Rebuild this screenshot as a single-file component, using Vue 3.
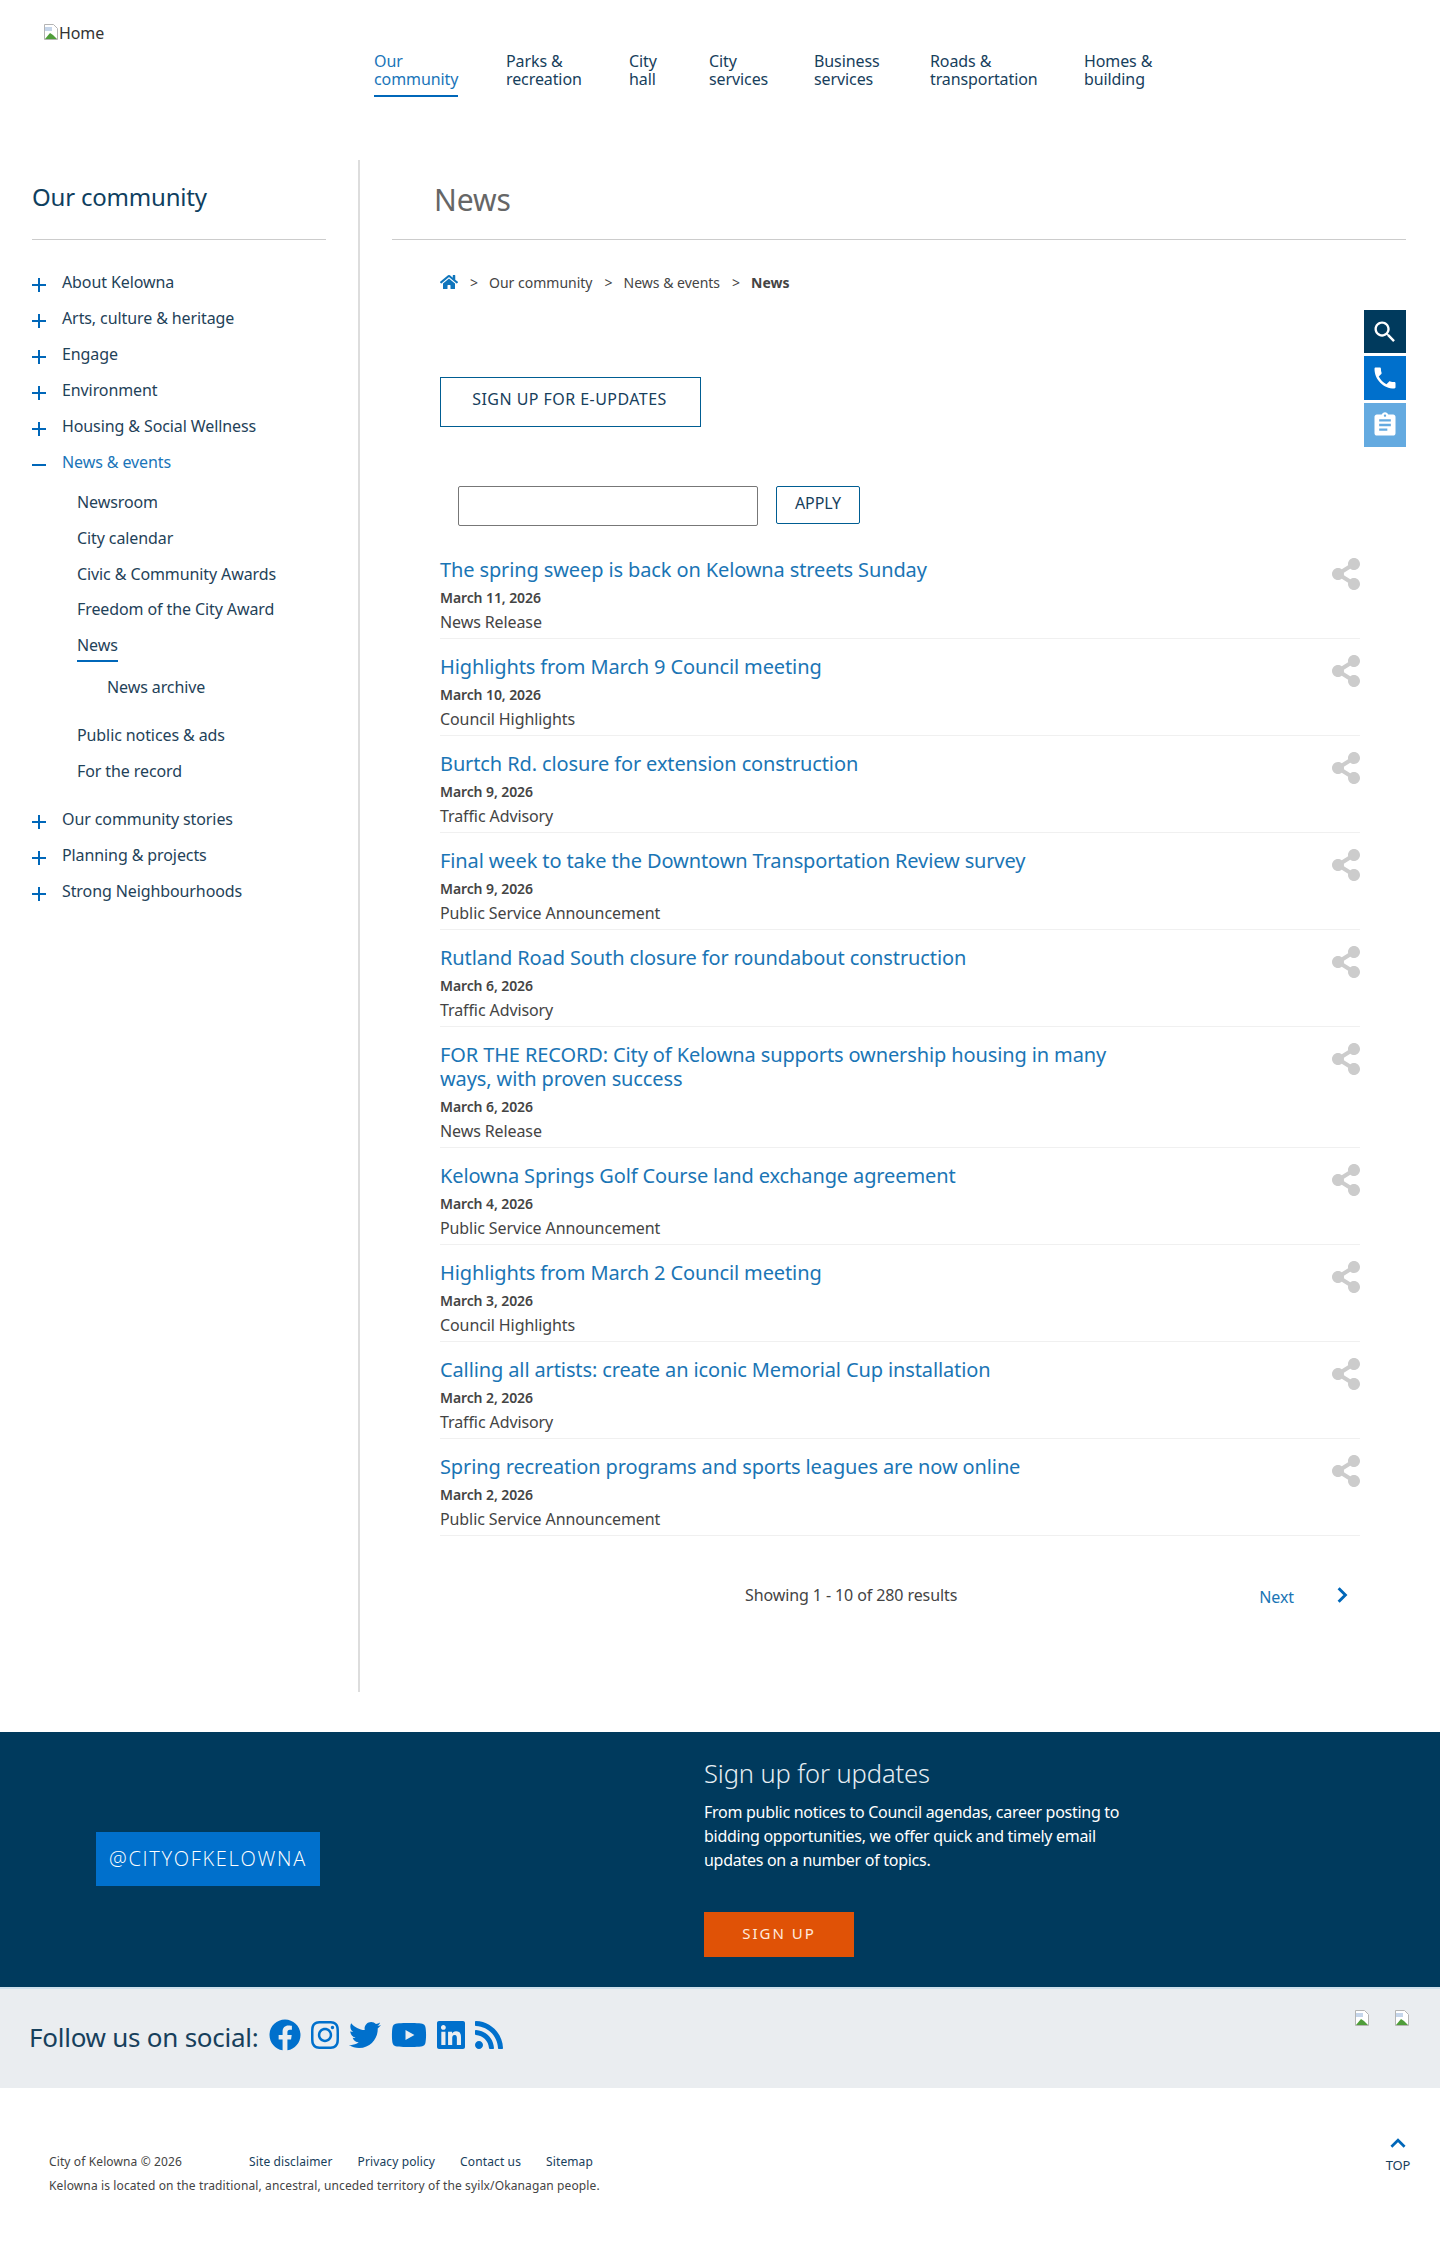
<template>
  <div class="page">
    <header class="site-header">
      <a class="logo">
        <svg class="broken" viewBox="0 0 16 16"><path d="M1.5.5h9l4 4v11h-13z" fill="#fff" stroke="#b4b4b4"/><path d="M2 15l5-6 3 2 4 4z" fill="#4f9d3a"/><path d="M2 3h7v4H2z" fill="#c5d5ea"/></svg>
        <span>Home</span>
      </a>
      <nav class="main-nav">
        <a v-for="item in navItems" :key="item[0] + item[1]" class="nav-item" :class="{ active: item[0] === 'Our' }">{{ item[0] }}<br>{{ item[1] }}</a>
      </nav>
    </header>

    <div class="content">
      <aside class="sidebar">
        <h2 class="side-title">Our community</h2>
        <ul class="side-list">
          <li v-for="item in topBefore" :key="item" class="side-item"><i class="plus"></i>{{ item }}</li>
          <li class="side-item open"><i class="minus"></i>News &amp; events</li>
          <li class="sub-list">
            <div v-for="item in subBefore" :key="item" class="sub-item">{{ item }}</div>
            <div class="sub-item"><span class="current">News</span></div>
            <div class="sub-sub-item">News archive</div>
            <div class="sub-item gap">Public notices &amp; ads</div>
            <div class="sub-item">For the record</div>
          </li>
          <li v-for="(item, i) in topAfter" :key="item" class="side-item" :class="{ after: i === 0 }"><i class="plus"></i>{{ item }}</li>
        </ul>
      </aside>

      <main class="main">
        <h1 class="page-title">News</h1>
        <div class="main-body">
          <div class="breadcrumb">
            <svg class="home-icon" viewBox="0 0 576 512"><path d="M280.37 148.26L96 300.11V464a16 16 0 0 0 16 16l112.06-.29a16 16 0 0 0 15.92-16V368a16 16 0 0 1 16-16h64a16 16 0 0 1 16 16v95.64a16 16 0 0 0 16 16.05L464 480a16 16 0 0 0 16-16V300L295.67 148.26a12.19 12.19 0 0 0-15.3 0zM571.6 251.47L488 182.56V44.05a12 12 0 0 0-12-12h-56a12 12 0 0 0-12 12v72.61L318.47 43a48 48 0 0 0-61 0L4.34 251.47a12 12 0 0 0-1.6 16.9l25.5 31A12 12 0 0 0 45.15 301l235.22-193.74a12.19 12.19 0 0 1 15.3 0L530.9 301a12 12 0 0 0 16.9-1.6l25.5-31a12 12 0 0 0-1.7-16.93z"/></svg>
            <span class="sep">&gt;</span><span>Our community</span>
            <span class="sep">&gt;</span><span>News &amp; events</span>
            <span class="sep">&gt;</span><b>News</b>
          </div>

          <a class="outline-btn">SIGN UP FOR E-UPDATES</a>

          <div class="filter">
            <input class="filter-input" type="text">
            <button class="apply-btn">APPLY</button>
          </div>

          <article v-for="row in news" :key="row.title" class="news-row">
            <div class="news-text">
              <a class="news-title">{{ row.title }}</a>
              <div class="news-date">{{ row.date }}</div>
              <div class="news-cat">{{ row.cat }}</div>
            </div>
            <svg class="share" viewBox="0 0 448 512"><path d="M352 320c-22.608 0-43.387 7.819-59.79 20.895l-102.486-64.054a96.551 96.551 0 0 0 0-41.683l102.486-64.054C308.613 184.181 329.392 192 352 192c53.019 0 96-42.981 96-96S405.019 0 352 0s-96 42.981-96 96c0 7.158.79 14.13 2.276 20.841L155.79 180.895C139.387 167.819 118.608 160 96 160c-53.019 0-96 42.981-96 96s42.981 96 96 96c22.608 0 43.387-7.819 59.79-20.895l102.486 64.054A96.301 96.301 0 0 0 256 416c0 53.019 42.981 96 96 96s96-42.981 96-96-42.981-96-96-96z"/></svg>
          </article>

          <div class="pager">
            <span class="showing">Showing 1 - 10 of 280 results</span>
            <a class="next">Next</a>
            <svg class="next-chevron" viewBox="0 0 12 16"><path d="M3 2l6 6-6 6" fill="none" stroke="#0067b9" stroke-width="2.6"/></svg>
          </div>
        </div>
      </main>
    </div>

    <div class="quick-links">
      <a class="quick dark"><svg viewBox="0 0 24 24"><path d="M15.5 14h-.79l-.28-.27C15.41 12.59 16 11.11 16 9.5 16 5.91 13.09 3 9.5 3S3 5.91 3 9.5 5.91 16 9.5 16c1.61 0 3.09-.59 4.23-1.57l.27.28v.79l5 4.99L20.49 19l-4.99-5zm-6 0C7.01 14 5 11.99 5 9.5S7.01 5 9.5 5 14 7.01 14 9.5 11.99 14 9.5 14z"/></svg></a>
      <a class="quick blue"><svg viewBox="0 0 24 24"><path d="M6.62 10.79c1.44 2.83 3.76 5.14 6.59 6.59l2.2-2.2c.27-.27.67-.36 1.02-.24 1.12.37 2.33.57 3.57.57.55 0 1 .45 1 1V20c0 .55-.45 1-1 1-9.39 0-17-7.61-17-17 0-.55.45-1 1-1h3.5c.55 0 1 .45 1 1 0 1.25.2 2.45.57 3.57.11.35.03.74-.25 1.02l-2.2 2.2z"/></svg></a>
      <a class="quick light"><svg viewBox="0 0 24 24"><path d="M19 3h-4.18C14.4 1.84 13.3 1 12 1c-1.3 0-2.4.84-2.82 2H5c-1.1 0-2 .9-2 2v14c0 1.1.9 2 2 2h14c1.1 0 2-.9 2-2V5c0-1.1-.9-2-2-2zm-7 0c.55 0 1 .45 1 1s-.45 1-1 1-1-.45-1-1 .45-1 1-1zm2 14H7v-2h7v2zm3-4H7v-2h10v2zm0-4H7V7h10v2z"/></svg></a>
    </div>

    <section class="signup-band">
      <div class="band-left"><a class="handle">@CITYOFKELOWNA</a></div>
      <div class="band-right">
        <h3>Sign up for updates</h3>
        <p>From public notices to Council agendas, career posting to<br>bidding opportunities, we offer quick and timely email<br>updates on a number of topics.</p>
        <a class="signup-btn">SIGN UP</a>
      </div>
    </section>

    <section class="social-band">
      <span class="follow">Follow us on social:</span>
      <svg class="s-fb" viewBox="0 0 512 512"><path d="M504 256C504 119 393 8 256 8S8 119 8 256c0 123.78 90.69 226.38 209.25 245V327.69h-63V256h63v-54.64c0-62.15 37-96.48 93.67-96.48 27.14 0 55.52 4.84 55.52 4.84v61h-31.28c-30.8 0-40.41 19.12-40.41 38.73V256h68.78l-11 71.69h-57.78V501C413.31 482.38 504 379.78 504 256z"/></svg>
      <svg class="s-ig" viewBox="0 0 448 512"><path d="M224.1 141c-63.6 0-114.9 51.3-114.9 114.9s51.3 114.9 114.9 114.9S339 319.5 339 255.9 287.7 141 224.1 141zm0 189.6c-41.1 0-74.7-33.5-74.7-74.7s33.5-74.7 74.7-74.7 74.7 33.5 74.7 74.7-33.6 74.7-74.7 74.7zm146.4-194.3c0 14.9-12 26.8-26.8 26.8-14.9 0-26.8-12-26.8-26.8s12-26.8 26.8-26.8 26.8 12 26.8 26.8zm76.1 27.2c-1.7-35.9-9.9-67.7-36.2-93.9-26.2-26.2-58-34.4-93.9-36.2-37-2.1-147.9-2.1-184.9 0-35.8 1.7-67.6 9.9-93.9 36.1s-34.4 58-36.2 93.9c-2.1 37-2.1 147.9 0 184.9 1.7 35.9 9.9 67.7 36.2 93.9s58 34.4 93.9 36.2c37 2.1 147.9 2.1 184.9 0 35.9-1.7 67.7-9.9 93.9-36.2 26.2-26.2 34.4-58 36.2-93.9 2.1-37 2.1-147.8 0-184.8zM398.8 388c-7.8 19.6-22.9 34.7-42.6 42.6-29.5 11.7-99.5 9-132.1 9s-102.7 2.6-132.1-9c-19.6-7.8-34.7-22.9-42.6-42.6-11.7-29.5-9-99.5-9-132.1s-2.6-102.7 9-132.1c7.8-19.6 22.9-34.7 42.6-42.6 29.5-11.7 99.5-9 132.1-9s102.7-2.6 132.1 9c19.6 7.8 34.7 22.9 42.6 42.6 11.7 29.5 9 99.5 9 132.1s2.7 102.7-9 132.1z"/></svg>
      <svg class="s-tw" viewBox="0 0 512 512"><path d="M459.37 151.716c.325 4.548.325 9.097.325 13.645 0 138.72-105.583 298.558-298.558 298.558-59.452 0-114.68-17.219-161.137-47.106 8.447.974 16.568 1.299 25.34 1.299 49.055 0 94.213-16.568 130.274-44.832-46.132-.975-84.792-31.188-98.112-72.772 6.498.974 12.995 1.624 19.818 1.624 9.421 0 18.843-1.3 27.614-3.573-48.081-9.747-84.143-51.98-84.143-102.985v-1.299c13.969 7.797 30.214 12.67 47.431 13.319-28.264-18.843-46.781-51.005-46.781-87.391 0-19.492 5.197-37.36 14.294-52.954 51.655 63.675 129.3 105.258 216.365 109.807-1.624-7.797-2.599-15.918-2.599-24.04 0-57.828 46.782-104.934 104.934-104.934 30.213 0 57.502 12.67 76.67 33.137 23.715-4.548 46.456-13.32 66.599-25.34-7.798 24.366-24.366 44.833-46.132 57.827 21.117-2.273 41.584-8.122 60.426-16.243-14.292 20.791-32.161 39.308-52.628 54.253z"/></svg>
      <svg class="s-yt" viewBox="0 0 576 512"><path d="M549.655 124.083c-6.281-23.65-24.787-42.276-48.284-48.597C458.781 64 288 64 288 64S117.22 64 74.629 75.486c-23.497 6.322-42.003 24.947-48.284 48.597-11.412 42.867-11.412 132.305-11.412 132.305s0 89.438 11.412 132.305c6.281 23.65 24.787 41.5 48.284 47.821C117.22 448 288 448 288 448s170.78 0 213.371-11.486c23.497-6.321 42.003-24.171 48.284-47.821 11.412-42.867 11.412-132.305 11.412-132.305s0-89.438-11.412-132.305zm-317.51 213.508V175.185l142.739 81.205-142.739 81.201z"/></svg>
      <svg class="s-li" viewBox="0 0 448 512"><path d="M416 32H31.9C14.3 32 0 46.5 0 64.3v383.4C0 465.5 14.3 480 31.9 480H416c17.6 0 32-14.5 32-32.3V64.3c0-17.8-14.4-32.3-32-32.3zM135.4 416H69V202.2h66.5V416zm-33.2-243c-21.3 0-38.5-17.3-38.5-38.5S80.9 96 102.2 96c21.2 0 38.5 17.3 38.5 38.5 0 21.3-17.2 38.5-38.5 38.5zm282.1 243h-66.4V312c0-24.8-.5-56.7-34.5-56.7-34.6 0-39.9 27-39.9 54.9V416h-66.4V202.2h63.7v29.2h.9c8.9-16.8 30.6-34.5 62.9-34.5 67.2 0 79.7 44.3 79.7 101.9V416z"/></svg>
      <svg class="s-rs" viewBox="0 0 448 512"><path d="M128.081 415.959c0 35.369-28.672 64.041-64.041 64.041S0 451.328 0 415.959s28.672-64.041 64.041-64.041 64.04 28.673 64.04 64.041zm175.66 47.25c-8.354-154.6-132.185-278.587-286.95-286.95C7.656 175.765 0 183.105 0 192.253v48.069c0 8.415 6.49 15.472 14.887 16.018 111.832 7.284 201.473 96.702 208.772 208.772.547 8.397 7.604 14.887 16.018 14.887h48.069c9.149.001 16.489-7.655 15.995-16.79zm144.249.288C439.596 229.677 251.465 40.445 16.503 32.01 7.473 31.686 0 38.981 0 48.016v48.068c0 8.625 6.835 15.645 15.453 15.999 191.179 7.839 344.627 161.316 352.465 352.465.353 8.618 7.373 15.453 15.999 15.453h48.068c9.034-.001 16.329-7.474 16.005-16.504z"/></svg>
      <div class="badges">
        <svg class="broken" viewBox="0 0 16 16"><path d="M1.5.5h9l4 4v11h-13z" fill="#fff" stroke="#b4b4b4"/><path d="M2 15l5-6 3 2 4 4z" fill="#4f9d3a"/><path d="M2 3h7v4H2z" fill="#c5d5ea"/></svg>
        <svg class="broken" viewBox="0 0 16 16"><path d="M1.5.5h9l4 4v11h-13z" fill="#fff" stroke="#b4b4b4"/><path d="M2 15l5-6 3 2 4 4z" fill="#4f9d3a"/><path d="M2 3h7v4H2z" fill="#c5d5ea"/></svg>
      </div>
    </section>

    <footer class="site-footer">
      <div class="foot-text">
        <div class="foot-line">
          <span class="copy">City of Kelowna © 2026</span>
          <a>Site disclaimer</a><a>Privacy policy</a><a>Contact us</a><a>Sitemap</a>
        </div>
        <div class="territory">Kelowna is located on the traditional, ancestral, unceded territory of the syilx/Okanagan people.</div>
      </div>
      <a class="top-link">
        <svg viewBox="0 0 16 10"><path d="M2 8l6-6 6 6" fill="none" stroke="#0067b9" stroke-width="2.4"/></svg>
        <span>TOP</span>
      </a>
    </footer>
  </div>
</template>

<script setup>
const navItems = [
  ["Our", "community"],
  ["Parks &", "recreation"],
  ["City", "hall"],
  ["City", "services"],
  ["Business", "services"],
  ["Roads &", "transportation"],
  ["Homes &", "building"],
];

const topBefore = ["About Kelowna", "Arts, culture & heritage", "Engage", "Environment", "Housing & Social Wellness"];
const subBefore = ["Newsroom", "City calendar", "Civic & Community Awards", "Freedom of the City Award"];
const topAfter = ["Our community stories", "Planning & projects", "Strong Neighbourhoods"];

const news = [
  { title: "The spring sweep is back on Kelowna streets Sunday", date: "March 11, 2026", cat: "News Release" },
  { title: "Highlights from March 9 Council meeting", date: "March 10, 2026", cat: "Council Highlights" },
  { title: "Burtch Rd. closure for extension construction", date: "March 9, 2026", cat: "Traffic Advisory" },
  { title: "Final week to take the Downtown Transportation Review survey", date: "March 9, 2026", cat: "Public Service Announcement" },
  { title: "Rutland Road South closure for roundabout construction", date: "March 6, 2026", cat: "Traffic Advisory" },
  { title: "FOR THE RECORD: City of Kelowna supports ownership housing in many ways, with proven success", date: "March 6, 2026", cat: "News Release" },
  { title: "Kelowna Springs Golf Course land exchange agreement", date: "March 4, 2026", cat: "Public Service Announcement" },
  { title: "Highlights from March 2 Council meeting", date: "March 3, 2026", cat: "Council Highlights" },
  { title: "Calling all artists: create an iconic Memorial Cup installation", date: "March 2, 2026", cat: "Traffic Advisory" },
  { title: "Spring recreation programs and sports leagues are now online", date: "March 2, 2026", cat: "Public Service Announcement" },
];
</script>

<style>
html, body { margin: 0; background: #fff; }
</style>

<style scoped>
.page {
  position: relative;
  width: 1440px;
  height: 2264px;
  overflow: hidden;
  font-family: "Noto Sans", "Open Sans", sans-serif;
  font-size: 16px;
  letter-spacing: -0.1px;
  color: #333;
}

/* header */
.site-header {
  display: flex;
  height: 160px;
}
.logo {
  width: 374px;
  box-sizing: border-box;
  padding: 24px 0 0 43px;
  display: flex;
  align-items: flex-start;
  line-height: 18px;
  color: #333;
}
.broken { width: 16px; height: 16px; flex: none; }
.main-nav {
  display: grid;
  grid-template-columns: 132px 123px 80px 105px 116px 154px auto;
  justify-items: start;
  align-items: start;
  padding-top: 52px;
}
.nav-item {
  line-height: 18px;
  padding-bottom: 7px;
  color: #17405c;
  border-bottom: 2px solid transparent;
}
.nav-item.active { color: #1a75b9; border-bottom-color: #0067b9; }

/* content */
.content { display: flex; height: 1532px; }
.sidebar {
  width: 360px;
  box-sizing: border-box;
  padding: 0 32px;
  border-right: 2px solid #ddd;
}
.side-title {
  margin: 0;
  height: 80px;
  box-sizing: border-box;
  padding-top: 20px;
  font-size: 24px;
  line-height: 34px;
  font-weight: 400;
  letter-spacing: -0.2px;
  color: #0f3f5f;
  border-bottom: 1px solid #ccc;
}
.side-list { list-style: none; margin: 24px 0 0; padding: 0; color: #1f4259; }
.side-item {
  display: flex;
  align-items: center;
  height: 36px;
}
.side-item.open { color: #1a75b9; }
.side-item.after { margin-top: 12px; }
.plus, .minus {
  position: relative;
  width: 14px;
  height: 14px;
  margin: 6px 16px 0 0;
  flex: none;
}
.plus::before, .minus::before {
  content: "";
  position: absolute;
  left: 0;
  right: 0;
  top: 6px;
  height: 2px;
  background: #0067b9;
}
.plus::after {
  content: "";
  position: absolute;
  top: 0;
  bottom: 0;
  left: 6px;
  width: 2px;
  background: #0067b9;
}
.sub-list { margin-top: 4px; padding-left: 45px; }
.sub-item { line-height: 36px; height: 36px; }
.sub-item:nth-child(3) { height: 35px; }
.sub-item.gap { margin-top: 12px; }
.current {
  display: inline-block;
  line-height: 24px;
  margin-top: 6px;
  padding-bottom: 3px;
  border-bottom: 2px solid #0067b9;
}
.sub-sub-item { line-height: 36px; margin-top: 6px; padding-left: 30px; }

/* main */
.main { flex: 1; padding: 0 34px 0 32px; min-width: 0; }
.page-title {
  margin: 0;
  height: 80px;
  box-sizing: border-box;
  padding: 20px 0 0 42px;
  font-size: 30px;
  line-height: 40px;
  font-weight: 400;
  color: #666;
  border-bottom: 1px solid #ccc;
}
.main-body { padding: 0 46px 0 48px; }
.breadcrumb {
  display: flex;
  align-items: center;
  height: 20px;
  margin-top: 32px;
  font-size: 14px;
  letter-spacing: 0;
  color: #444;
}
.breadcrumb b { font-weight: 700; }
.home-icon { width: 18px; height: 16px; margin-left: 0; fill: #0f75bc; }
.sep { margin: 0 11px 0 12px; }
.outline-btn {
  display: block;
  width: 261px;
  height: 50px;
  box-sizing: border-box;
  margin-top: 85px;
  padding: 10px 2px 0 0;
  border: 1px solid #005d92;
  text-align: center;
  line-height: 22px;
  letter-spacing: 0.45px;
  color: #17405c;
}
.filter {
  display: flex;
  gap: 18px;
  align-items: flex-start;
  margin: 59px 0 16px 18px;
}
.filter-input {
  width: 300px;
  height: 40px;
  box-sizing: border-box;
  border: 1px solid #777;
  border-radius: 2px;
  background: #fff;
}
.apply-btn {
  width: 84px;
  height: 38px;
  padding: 0 0 4px;
  background: #fff;
  border: 1px solid #005d92;
  border-radius: 2px;
  font: inherit;
  letter-spacing: inherit;
  color: #17405c;
}
.news-row {
  display: flex;
  justify-content: space-between;
  align-items: flex-start;
  padding: 16px 0 4px;
  border-bottom: 1px solid #f0f0f0;
}
.news-text { width: 690px; }
.news-title {
  display: block;
  font-size: 20px;
  line-height: 24px;
  letter-spacing: -0.12px;
  color: #1a75b5;
}
.news-date {
  margin-top: 6px;
  font-size: 14px;
  line-height: 20px;
  font-weight: 600;
  color: #444;
}
.news-cat { margin-top: 2px; line-height: 24px; color: #444; }
.share { width: 28px; height: 32px; fill: #ccc; }
.pager {
  display: flex;
  align-items: center;
  margin-top: 49px;
  height: 20px;
}
.showing { margin-left: 305px; color: #444; }
.next { margin-left: auto; color: #1a75b5; padding-top: 3px; }
.next-chevron { width: 14px; height: 18px; margin: 0 11px 0 41px; }

/* quick links */
.quick-links {
  position: absolute;
  top: 310px;
  left: 1364px;
  width: 42px;
}
.quick {
  display: flex;
  align-items: center;
  justify-content: center;
  height: 44px;
  margin-bottom: 3px;
}
.quick svg { width: 28px; height: 28px; fill: #fff; }
.quick.dark { background: #003a5d; height: 43px; }
.quick.blue { background: #0070cc; }
.quick.light { background: #64aae0; }

/* signup band */
.signup-band {
  display: flex;
  height: 255px;
  margin-top: 40px;
  background: #003a5d;
  color: #fff;
}
.band-left { width: 704px; padding: 100px 0 0 96px; box-sizing: border-box; }
.handle {
  display: block;
  width: 224px;
  height: 54px;
  background: #0070cc;
  text-align: center;
  font-family: "Open Sans", sans-serif;
  font-weight: 300;
  font-size: 20px;
  line-height: 54px;
  letter-spacing: 1.7px;
}
.band-right { padding-top: 23px; }
.band-right h3 { margin: 0; font-size: 25.5px; line-height: 36px; font-weight: 300; color: #e6eef3; }
.band-right p { margin: 9px 0 0; line-height: 24px; letter-spacing: -0.28px; }
.signup-btn {
  display: block;
  width: 150px;
  height: 45px;
  margin-top: 40px;
  background: #e05206;
  text-align: center;
  font-size: 15px;
  line-height: 43px;
  letter-spacing: 2px;
  color: #ffe9dc;
}

/* social band */
.social-band {
  display: flex;
  align-items: flex-start;
  height: 99px;
  margin-top: 2px;
  background: #eaedf0;
  box-shadow: 0 -2px 0 #cfe0ec;
}
.follow {
  margin: 29px 0 0 29px;
  font-size: 26px;
  line-height: 38px;
  letter-spacing: -0.25px;
  color: #17405c;
}
.social-band svg { fill: #0070cc; margin-top: 30px; flex: none; }
.s-fb { width: 32px; height: 32px; margin-left: 10px; }
.s-ig { width: 28px; height: 32px; margin-left: 10px; }
.s-tw { width: 32px; height: 32px; margin-left: 10px; }
.s-yt { width: 36px; height: 32px; margin-left: 10px; }
.s-li { width: 28px; height: 32px; margin-left: 10px; }
.s-rs { width: 28px; height: 32px; margin-left: 10px; }
.badges { display: flex; gap: 24px; margin-left: auto; padding: 21px 30px 0 0; }
.social-band .badges svg { margin-top: 0; }

/* footer */
.site-footer { position: relative; padding: 62px 0 0 49px; }
.foot-text { font-size: 12px; letter-spacing: 0.12px; color: #444; }
.foot-line { display: flex; line-height: 24px; }
.foot-line .copy { width: 200px; }
.foot-line a { margin-right: 25px; color: #17405c; }
.territory { line-height: 24px; }
.top-link {
  position: absolute;
  top: 50px;
  left: 1384px;
  width: 28px;
  text-align: center;
  font-size: 13px;
  color: #17405c;
}
.top-link svg { display: block; width: 18px; height: 11px; margin: 0 auto 7px; }
</style>
